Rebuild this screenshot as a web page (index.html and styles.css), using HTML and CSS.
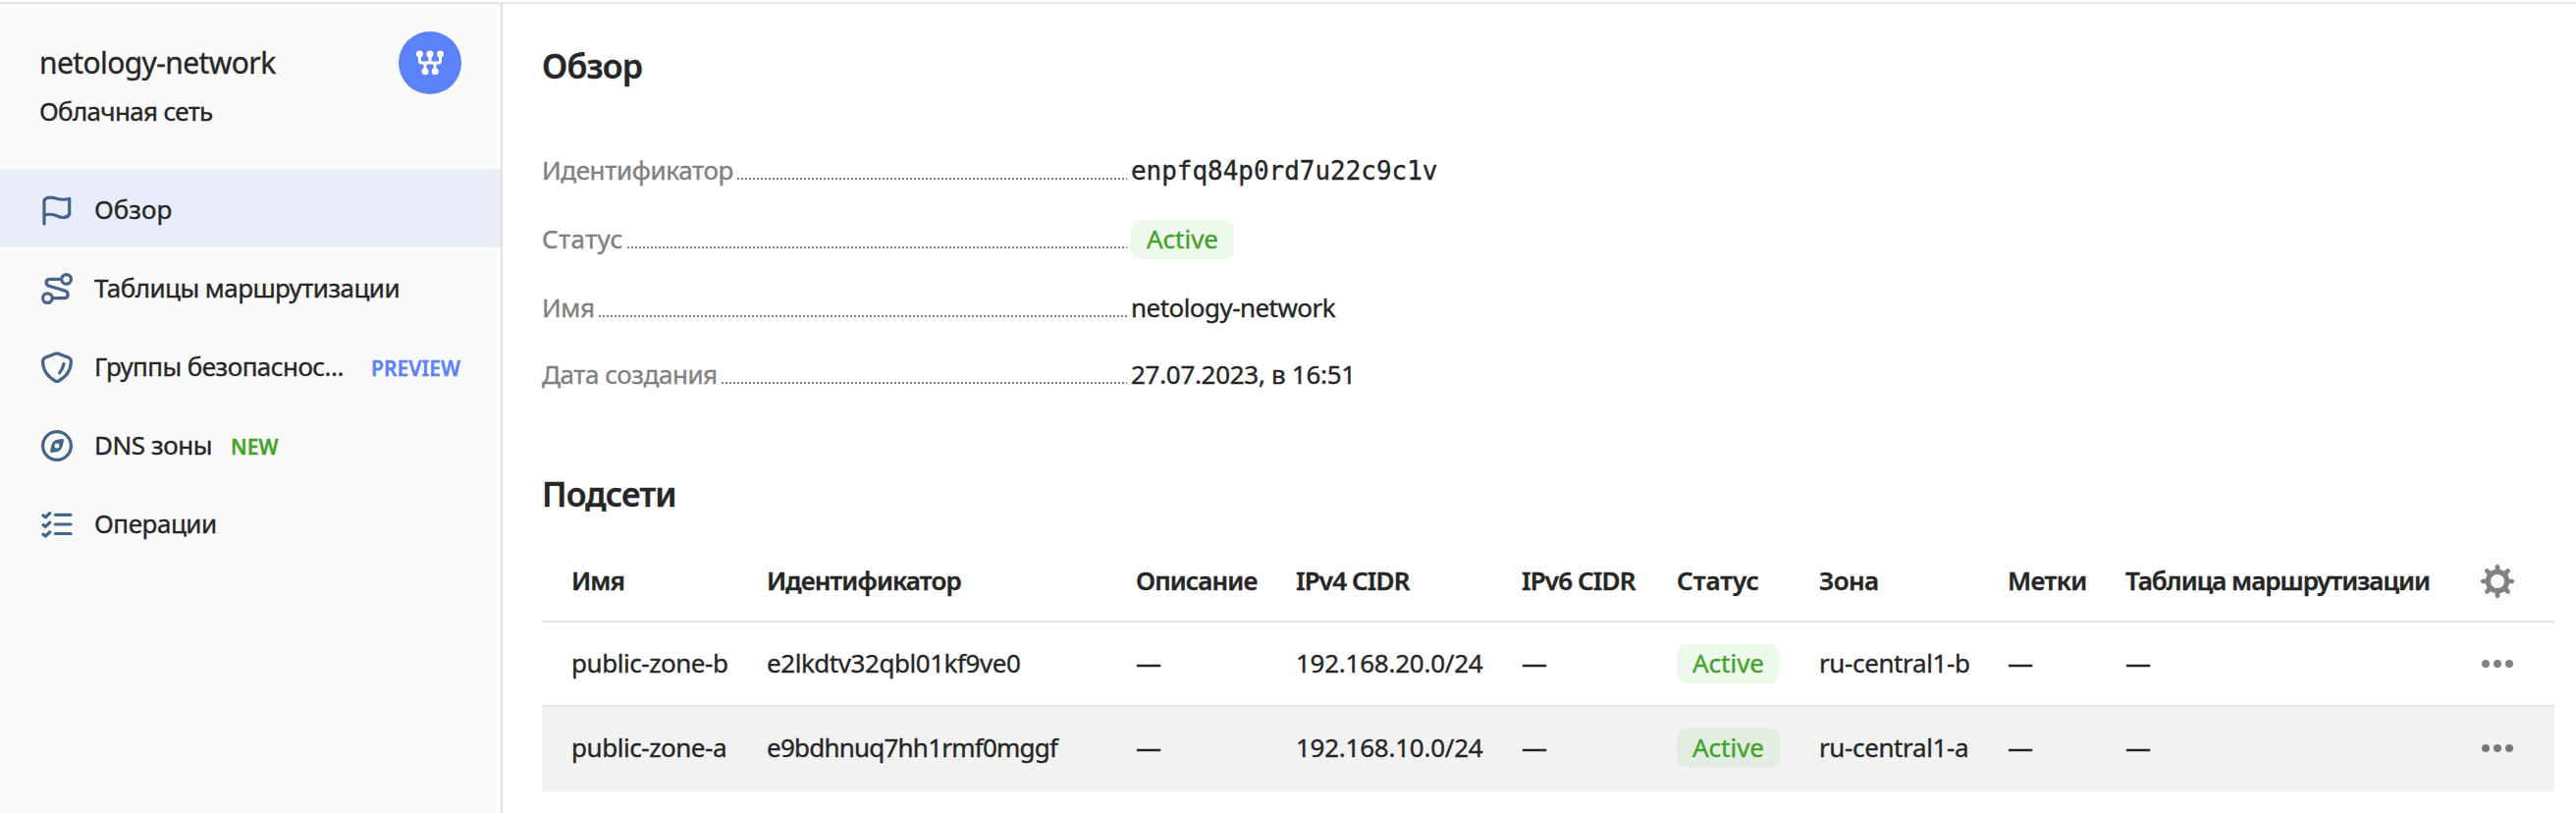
FILE: index.html
```html
<!DOCTYPE html>
<html lang="ru">
<head>
<meta charset="utf-8">
<title>netology-network</title>
<link rel="stylesheet" href="styles.css">
</head>
<body>
<div class="page">
  <aside class="sidebar">
    <header class="resource">
      <div class="resource-text">
        <div class="resource-name">netology-network</div>
        <div class="resource-type">Облачная сеть</div>
      </div>
      <svg class="resource-logo" viewBox="0 0 64 64">
        <circle cx="32" cy="32" r="32" fill="#5c82f9"/>
        <path d="M21.5 23V30Q21.5 32 23.5 32H40.5Q42.5 32 42.5 30V23M32 23V32M27 32V41M37 32V41" fill="none" stroke="#fff" stroke-width="3"/>
        <g fill="#fff"><circle cx="21.5" cy="23" r="3.5"/><circle cx="32" cy="23" r="3.5"/><circle cx="42.5" cy="23" r="3.5"/><circle cx="27" cy="40.7" r="3.5"/><circle cx="37.2" cy="40.7" r="3.5"/></g>
      </svg>
    </header>
    <nav class="nav">
      <a class="nav-item nav-item-active">
        <svg class="nav-icon" viewBox="0 0 32 32"><path d="M3 30V6C4.2 3.3 9 2.5 13 3.6C17 4.9 21 6.5 28.7 4.3V20C27 24 21 24.3 17 22.3C12 20 7 19.6 3 21.5"/></svg>
        <span>Обзор</span>
      </a>
      <a class="nav-item">
        <svg class="nav-icon" viewBox="0 0 32 32"><circle cx="25.6" cy="6.4" r="4.8"/><circle cx="6.4" cy="25.6" r="4.8"/><path d="M20.5 6.3H9C4 6.3 4 12 8 13.2L24 18C28.5 19.5 28 25.7 23.5 25.7H11.5"/></svg>
        <span class="ls-55">Таблицы маршрутизации</span>
      </a>
      <a class="nav-item">
        <svg class="nav-icon" viewBox="0 0 32 32"><path d="M14.5 2.2Q16 1.6 17.5 2.2L27.5 6.1Q30.4 7.3 30.4 10C30.4 18 26 25.2 17.8 30Q16 31 14.2 30C6 25.2 1.6 18 1.6 10Q1.6 7.3 4.5 6.1ZM23 12.5Q22 18 18.7 21.7"/></svg>
        <span class="ls-55">Группы безопаснос...</span>
        <span class="tag tag-preview">PREVIEW</span>
      </a>
      <a class="nav-item">
        <svg class="nav-icon" viewBox="0 0 32 32"><circle cx="16" cy="16" r="14.4"/><path class="solid" fill-rule="evenodd" d="M22 9C17 9.3 12.5 10 11 14C9.8 17 9.5 19 9.2 22Q9.2 23.2 10.5 23C15 22.5 19.5 22 21 18C22.2 15 22.6 13 23 10.2Q23 9 22 9ZM16 13.5A2.5 2.5 0 1 0 16 18.5A2.5 2.5 0 1 0 16 13.5Z"/></svg>
        <span class="ls-45">DNS зоны</span>
        <span class="tag tag-new">NEW</span>
      </a>
      <a class="nav-item">
        <svg class="nav-icon" viewBox="0 0 32 32"><path d="M14.5 6.3H30M14.5 16H30M14.5 25.5H30M2 7L4.4 8.8L8.7 4.6M2 16.6L4.4 18.4L8.7 14.2M2 26.2L4.4 28L8.7 23.8"/></svg>
        <span class="ls-45">Операции</span>
      </a>
    </nav>
  </aside>

  <main class="content">
    <h1 class="heading">Обзор</h1>
    <dl class="details">
      <div class="detail"><dt class="ls-38">Идентификатор</dt><i class="leader"></i><dd class="mono">enpfq84p0rd7u22c9c1v</dd></div>
      <div class="detail"><dt class="ls-plus">Статус</dt><i class="leader"></i><dd><span class="badge">Active</span></dd></div>
      <div class="detail"><dt class="ls-30">Имя</dt><i class="leader"></i><dd class="ls-55">netology-network</dd></div>
      <div class="detail"><dt class="ls-45">Дата создания</dt><i class="leader"></i><dd class="ls-30">27.07.2023, в 16:51</dd></div>
    </dl>
    <h2 class="heading">Подсети</h2>
    <section class="table">
      <div class="row head">
        <span>Имя</span><span>Идентификатор</span><span>Описание</span><span class="ls-88">IPv4 CIDR</span><span class="ls-88">IPv6 CIDR</span><span class="ls-0">Статус</span><span class="ls-60">Зона</span><span class="ls-60">Метки</span><span class="ls-100">Таблица маршрутизации</span>
        <svg class="action" viewBox="-18 -18 36 36" fill="none" stroke="#808080"><circle r="9.7" stroke-width="5.2"/><path d="M0-11V-16M0 11V16M-11 0H-16M11 0H16M-8-8L-11.2-11.2M8-8L11.2-11.2M-8 8L-11.2 11.2M8 8L11.2 11.2" stroke-width="4.6"/><path d="M0-15.5V-15.6M0 15.5V15.6M-15.5 0H-15.6M15.5 0H15.6M-11-11L-11.1-11.1M11-11L11.1-11.1M-11 11L-11.1 11.1M11 11L11.1 11.1" stroke-width="3.4" stroke-linecap="round"/></svg>
      </div>
      <div class="row">
        <span class="ls-45">public-zone-b</span><span class="ls-45">e2lkdtv32qbl01kf9ve0</span><span>—</span><span class="ls-25">192.168.20.0/24</span><span>—</span><span><b class="badge">Active</b></span><span class="ls-38">ru-central1-b</span><span>—</span><span>—</span>
        <svg class="action" viewBox="-18 -18 36 36" fill="#808080"><circle cx="-12" r="4"/><circle r="4"/><circle cx="12" r="4"/></svg>
      </div>
      <div class="row row-hover">
        <span class="ls-45">public-zone-a</span><span class="ls-78">e9bdhnuq7hh1rmf0mggf</span><span>—</span><span class="ls-25">192.168.10.0/24</span><span>—</span><span><b class="badge">Active</b></span><span class="ls-38">ru-central1-a</span><span>—</span><span>—</span>
        <svg class="action" viewBox="-18 -18 36 36" fill="#7b7b7b"><circle cx="-12" r="4"/><circle r="4"/><circle cx="12" r="4"/></svg>
      </div>
    </section>
  </main>
</div>
</body>
</html>
```
FILE: styles.css
```css
* { box-sizing: border-box; }

body {
  margin: 0;
  background: #fff;
  color: #262626;
  font: 26px/36px "Noto Sans", "Open Sans", sans-serif;
  -webkit-text-stroke: 0.35px currentColor;
}

.page {
  display: flex;
  height: 828px;
  padding-top: 4px;
  background: linear-gradient(#e5e5e5, #e5e5e5) 0 2px / 100% 2px no-repeat;
  overflow: hidden;
  white-space: nowrap;
}

/* Sidebar */
.sidebar {
  flex: 0 0 512px;
  border-right: 2px solid #e0e0e0;
  background: #fafafa;
}

.resource {
  display: flex;
  justify-content: space-between;
  height: 168px;
  padding: 28px 40px 0 40px;
}

.resource-name {
  height: 64px;
  font-size: 30px;
  line-height: 63px;
  letter-spacing: -0.6px;
}

.resource-type {
  line-height: 35px;
  letter-spacing: -0.68px;
}

.resource-logo {
  width: 64px;
  height: 64px;
}

.nav-item {
  display: flex;
  align-items: center;
  height: 80px;
  padding: 2px 41px 0 42px;
}

.nav-item-active { background: #e9edfa; }

.nav-icon {
  flex: none;
  width: 32px;
  height: 32px;
  margin: 2px 22px 0 0;
  fill: none;
  stroke: #466489;
  stroke-width: 3.2;
  stroke-linecap: round;
  stroke-linejoin: round;
}

.nav-icon .solid {
  fill: #466489;
  stroke: none;
}

.tag {
  padding-top: 3px;
  font-size: 21px;
  font-weight: 600;
}

.tag-preview {
  margin-left: auto;
  color: #5c82f9;
}

.tag-new {
  margin-left: 19px;
  color: #42a32a;
}

/* Main column */
.content {
  flex: 1;
  padding: 40px 22px 0 40px;
}

.heading {
  margin: 0;
  font-size: 34px;
  line-height: 46px;
  font-weight: 600;
  letter-spacing: -0.8px;
}

.details {
  display: grid;
  grid-template-rows: 38px 38px 38px 36px;
  row-gap: 32px;
  margin: 64px 0 80px;
}

.detail {
  display: flex;
  align-items: center;
}

.detail:last-child { padding-bottom: 2px; }

.detail dt {
  flex: none;
  color: #808080;
}

.detail dd {
  flex: none;
  width: 1450px;
  margin: 0;
}

.leader {
  flex: 1;
  height: 2px;
  margin: 18px 4px 0 4px;
  background: repeating-linear-gradient(90deg, #828282 0 2px, transparent 2px 4px);
}

.detail .mono {
  padding-top: 1px;
  font-family: "DejaVu Sans Mono", monospace;
  letter-spacing: -0.03px;
}

.badge {
  display: inline-block;
  width: 105px;
  height: 40px;
  border-radius: 10px;
  background: #eef8ed;
  color: #42a32a;
  font-weight: 400;
  line-height: 38px;
  text-align: center;
  vertical-align: middle;
}

/* Subnet table */
.table { margin-top: 22px; }

.row {
  display: grid;
  grid-template-columns: 199px 376px 163px 230px 158px 145px 192px 120px 361px 36px;
  align-items: center;
  height: 86px;
  padding: 0 0 2px 30px;
  border-bottom: 2px solid #e5e5e5;
}

.head {
  padding-bottom: 0;
  padding-top: 2px;
  font-weight: 600;
  letter-spacing: -0.88px;
}

.action {
  width: 36px;
  height: 36px;
  margin-top: 2px;
}

.row-hover {
  border-bottom-color: #f2f2f2;
  background: #f2f2f2;
}

.row-hover .badge { background: #e4ede2; }

/* Letter tracking */
.ls-0 { letter-spacing: 0; }
.ls-25 { letter-spacing: -0.25px; }
.ls-30 { letter-spacing: -0.3px; }
.ls-38 { letter-spacing: -0.38px; }
.ls-45 { letter-spacing: -0.45px; }
.ls-55 { letter-spacing: -0.55px; }
.ls-60 { letter-spacing: -0.6px; }
.ls-78 { letter-spacing: -0.78px; }
.ls-88 { letter-spacing: -0.88px; }
.ls-100 { letter-spacing: -1px; }
.ls-plus { letter-spacing: 0.4px; }
```
